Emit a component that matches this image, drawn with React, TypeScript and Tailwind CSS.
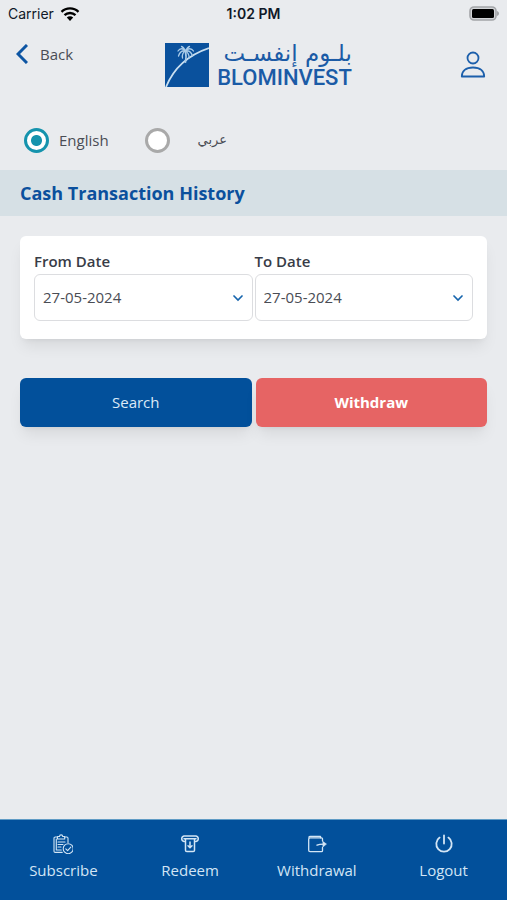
import React, { useState } from 'react';

const dates = ['27-05-2024', '26-05-2024', '25-05-2024'];

const StatusBar: React.FC = () => (
  <div className="grid h-7 grid-cols-3 items-center px-2 font-['Inter',sans-serif] text-sm text-gray-900">
    <div className="flex items-center gap-1.5">
      <span>Carrier</span>
      <svg className="h-3.5 w-5" viewBox="0 0 20 14" aria-hidden="true">
        <path d="M10 14 6.8 10.6a4.6 4.6 0 0 1 6.4 0Z" fill="#000" />
        <path d="M4.5 8.2a8 8 0 0 1 11 0M1.5 4.9a12.2 12.2 0 0 1 17 0" fill="none" stroke="#000" strokeWidth="2.3" />
      </svg>
    </div>
    <span className="text-center font-semibold">1:02 PM</span>
    <svg className="h-4 w-8 justify-self-end" viewBox="0 0 32 16" aria-hidden="true">
      <rect x="3" y="1" width="26" height="13" rx="4" fill="#d3d5d8" stroke="#a3a5a8" strokeWidth="1.6" />
      <rect x="5" y="3" width="22" height="9" rx="1.5" fill="#000" />
      <path d="M30 5v5c1.4-.5 2-1.4 2-2.500s-.6-2-2-2.500Z" fill="#a3a5a8" />
    </svg>
  </div>
);

const Logo: React.FC = () => (
  <div className="flex items-center gap-2 pl-2.5 text-[#1b5ba6]">
    <svg className="h-11 w-11" viewBox="0 0 44 44" aria-hidden="true">
      <rect width="44" height="44" fill="#0a519d" />
      <path d="M1 44C7 29 20 13 44 5" fill="none" stroke="#c9dff0" strokeWidth="1.8" />
      <g fill="none" stroke="#a9cbe8" strokeWidth="1.3" strokeLinecap="round">
        <path d="M20.500 8c.8 4 .8 7 0 11" strokeWidth="1.8" />
        <path d="M20.500 8C18 5 15 5 13 8M20.500 8c2.500-3 6-3 8 0M20.500 8c-3-1-6 1-7 5M20.500 8c3-1 6 1 7 5M20.500 8c-2 1-3.500 4-3 7M20.500 8c2 1 4 4 3.500 7M20.500 8c-1-2-2-4-4-4.500M20.500 8c1-2 2-4 4-4.500" />
      </g>
    </svg>
    <div className="flex flex-col">
      <span dir="rtl" lang="ar" className="font-['DejaVu_Sans',sans-serif] text-[23px] leading-[26px]">
        بلـوم إنفسـت
      </span>
      <span className="font-['Roboto',sans-serif] text-[22px] leading-6 font-medium">BLOMINVEST</span>
    </div>
  </div>
);

interface LanguageOptionProps {
  value: string;
  label: string;
  selected: string;
  onSelect: (value: string) => void;
  className?: string;
}

const LanguageOption: React.FC<LanguageOptionProps> = ({ value, label, selected, onSelect, className = '' }) => (
  <label className={`flex items-center ${className}`}>
    <input
      type="radio"
      name="language"
      value={value}
      checked={selected === value}
      onChange={() => onSelect(value)}
      className="h-[25px] w-[25px] appearance-none rounded-full border-3 border-[#a9a9a9] bg-white checked:border-[#1593ad] checked:bg-[radial-gradient(circle,#1593ad_5px,white_6px)]"
    />
    <span lang={value}>{label}</span>
  </label>
);

interface DateSelectProps {
  id: string;
  label: string;
}

const DateSelect: React.FC<DateSelectProps> = ({ id, label }) => {
  const [value, setValue] = useState(dates[0]);

  return (
    <div className="min-w-0 flex-1">
      <label htmlFor={id} className="block pb-0.5 text-[15px] leading-[22px] font-semibold text-[#383c47]">
        {label}
      </label>
      <div className="relative">
        <select
          id={id}
          value={value}
          onChange={(e) => setValue(e.target.value)}
          className="h-[47px] w-full appearance-none rounded-md border border-[#dcdde0] bg-white px-2 text-[15px] text-[#4a4d55]"
        >
          {dates.map((date) => (
            <option key={date}>{date}</option>
          ))}
        </select>
        <svg
          className="pointer-events-none absolute top-1/2 right-2.5 h-2.5 w-2.5 -translate-y-1/2"
          viewBox="0 0 10 10"
          aria-hidden="true"
        >
          <path d="m1 3 4 4 4-4" fill="none" stroke="#1765ad" strokeWidth="1.700" strokeLinecap="round" />
        </svg>
      </div>
    </div>
  );
};

const navItems = [
  {
    label: 'Subscribe',
    icon: (
      <g strokeWidth="1.1">
        <path d="M4.500 3H2.200C1.500 3 1 3.500 1 4.200v13c0 .7.5 1.200 1.200 1.200h7M11.500 3h2.300c.7 0 1.200.5 1.200 1.200v4.300" />
        <path d="M4.500 2.500h2a1.600 1.600 0 0 1 3.200 0h2V5H4.500ZM3.300 5v11h5" />
        <path d="M5 8h7M5 10.500h5M5 13h3" />
        <circle cx="15.200" cy="14.700" r="5" />
        <path d="m12.800 14.900 1.800 1.800 3.200-3.600" />
      </g>
    ),
  },
  {
    label: 'Redeem',
    icon: (
      <g strokeWidth="1.500">
        <path d="M4.500 7.500H4a2.800 2.800 0 0 1 0-5.500h12a2.800 2.800 0 0 1 0 5.500h-.5" />
        <path d="M4 4.800h12M5.500 5v11.200c0 .7.5 1.300 1.300 1.300h6.400c.8 0 1.300-.6 1.300-1.300V5" />
        <path d="M10 8v5.500M8 11.700l2 2 2-2" />
      </g>
    ),
  },
  {
    label: 'Withdrawal',
    icon: (
      <g strokeWidth="1.300">
        <path d="M15.500 7V4.800c0-.6-.4-1-1-1H3.200a1.500 1.500 0 0 0-1.500 1.500v11c0 .8.600 1.400 1.400 1.400h11.400c.6 0 1-.4 1-1V13.500" />
        <path d="M2 3.500C2 2.700 2.600 2.300 3.300 2.300h10.200v1.500" />
        <path d="M10 11.200c2-.9 4.500-1 7-1" />
        <path d="m16 7.500 3.500 2.600-3.500 2.800Z" fill="currentColor" strokeWidth="0.500" />
      </g>
    ),
  },
  {
    label: 'Logout',
    icon: (
      <g strokeWidth="1.800">
        <path d="M5.600 3.600a7.700 7.700 0 1 0 8.800 0" />
        <path d="M10 1.500v8" />
      </g>
    ),
  },
];

export default function App() {
  const [language, setLanguage] = useState('en');

  return (
    <div className="flex min-h-screen flex-col bg-[#e9ebee] font-['Open_Sans','DejaVu_Sans',sans-serif] text-[#4a4d55]">
      <StatusBar />

      <header className="flex h-[74px] items-center justify-between px-4">
        <button className="flex flex-1 items-center gap-3 pb-5.5 text-[15px] leading-6">
          <svg className="h-5 w-3" viewBox="0 0 12 20" aria-hidden="true">
            <path d="m11 1-9 9 9 9" fill="none" stroke="#0d55a3" strokeWidth="3" />
          </svg>
          Back
        </button>
        <Logo />
        <div className="flex flex-1 justify-end">
          <button aria-label="Profile" className="px-1">
            <svg className="h-7 w-7" viewBox="0 0 28 28" fill="none" stroke="#1c5fab" strokeWidth="1.800" aria-hidden="true">
              <circle cx="14" cy="7" r="5.500" />
              <path d="M2.800 25.500c0-5.400 4-9 11.200-9s11.200 3.600 11.200 9Z" strokeLinejoin="round" />
            </svg>
          </button>
        </div>
      </header>

      <main className="flex-1">
        <div className="flex h-[68px] items-center gap-9 px-6 pt-2 text-[15px]">
          <LanguageOption value="en" label="English" selected={language} onSelect={setLanguage} className="gap-2.5" />
          <LanguageOption value="ar" label="عربي" selected={language} onSelect={setLanguage} className="gap-7 text-[13px]" />
        </div>

        <h1 className="bg-[#d6e0e5] px-5 py-2.5 text-lg leading-[26px] font-bold text-[#0b509d]">
          Cash Transaction History
        </h1>

        <div className="flex flex-col gap-[39px] px-5 pt-5">
          <div className="flex gap-0.5 rounded-md bg-white px-3.5 pt-3.5 pb-[18px] shadow-lg shadow-black/8">
            <DateSelect id="from-date" label="From Date" />
            <DateSelect id="to-date" label="To Date" />
          </div>

          <div className="flex gap-1">
            <button className="h-[49px] flex-1 rounded-md bg-[#02509b] text-[15px] text-[#dceaf7] shadow-lg shadow-black/8">
              Search
            </button>
            <button className="h-[49px] flex-1 rounded-md bg-[#e66464] text-[15px] font-bold text-white shadow-lg shadow-black/8">
              Withdraw
            </button>
          </div>
        </div>
      </main>

      <nav className="grid h-[81px] grid-cols-4 border-t border-[#5f9bc5] bg-[#02509b] pt-3.5 text-[#d3e5f5]">
        {navItems.map((item) => (
          <a key={item.label} href="#" className="flex flex-col items-center gap-1 text-[15px] leading-6">
            <svg
              className="h-5 w-5"
              viewBox="0 0 20 20"
              fill="none"
              stroke="currentColor"
              strokeLinecap="round"
              strokeLinejoin="round"
              aria-hidden="true"
            >
              {item.icon}
            </svg>
            {item.label}
          </a>
        ))}
      </nav>
    </div>
  );
}
